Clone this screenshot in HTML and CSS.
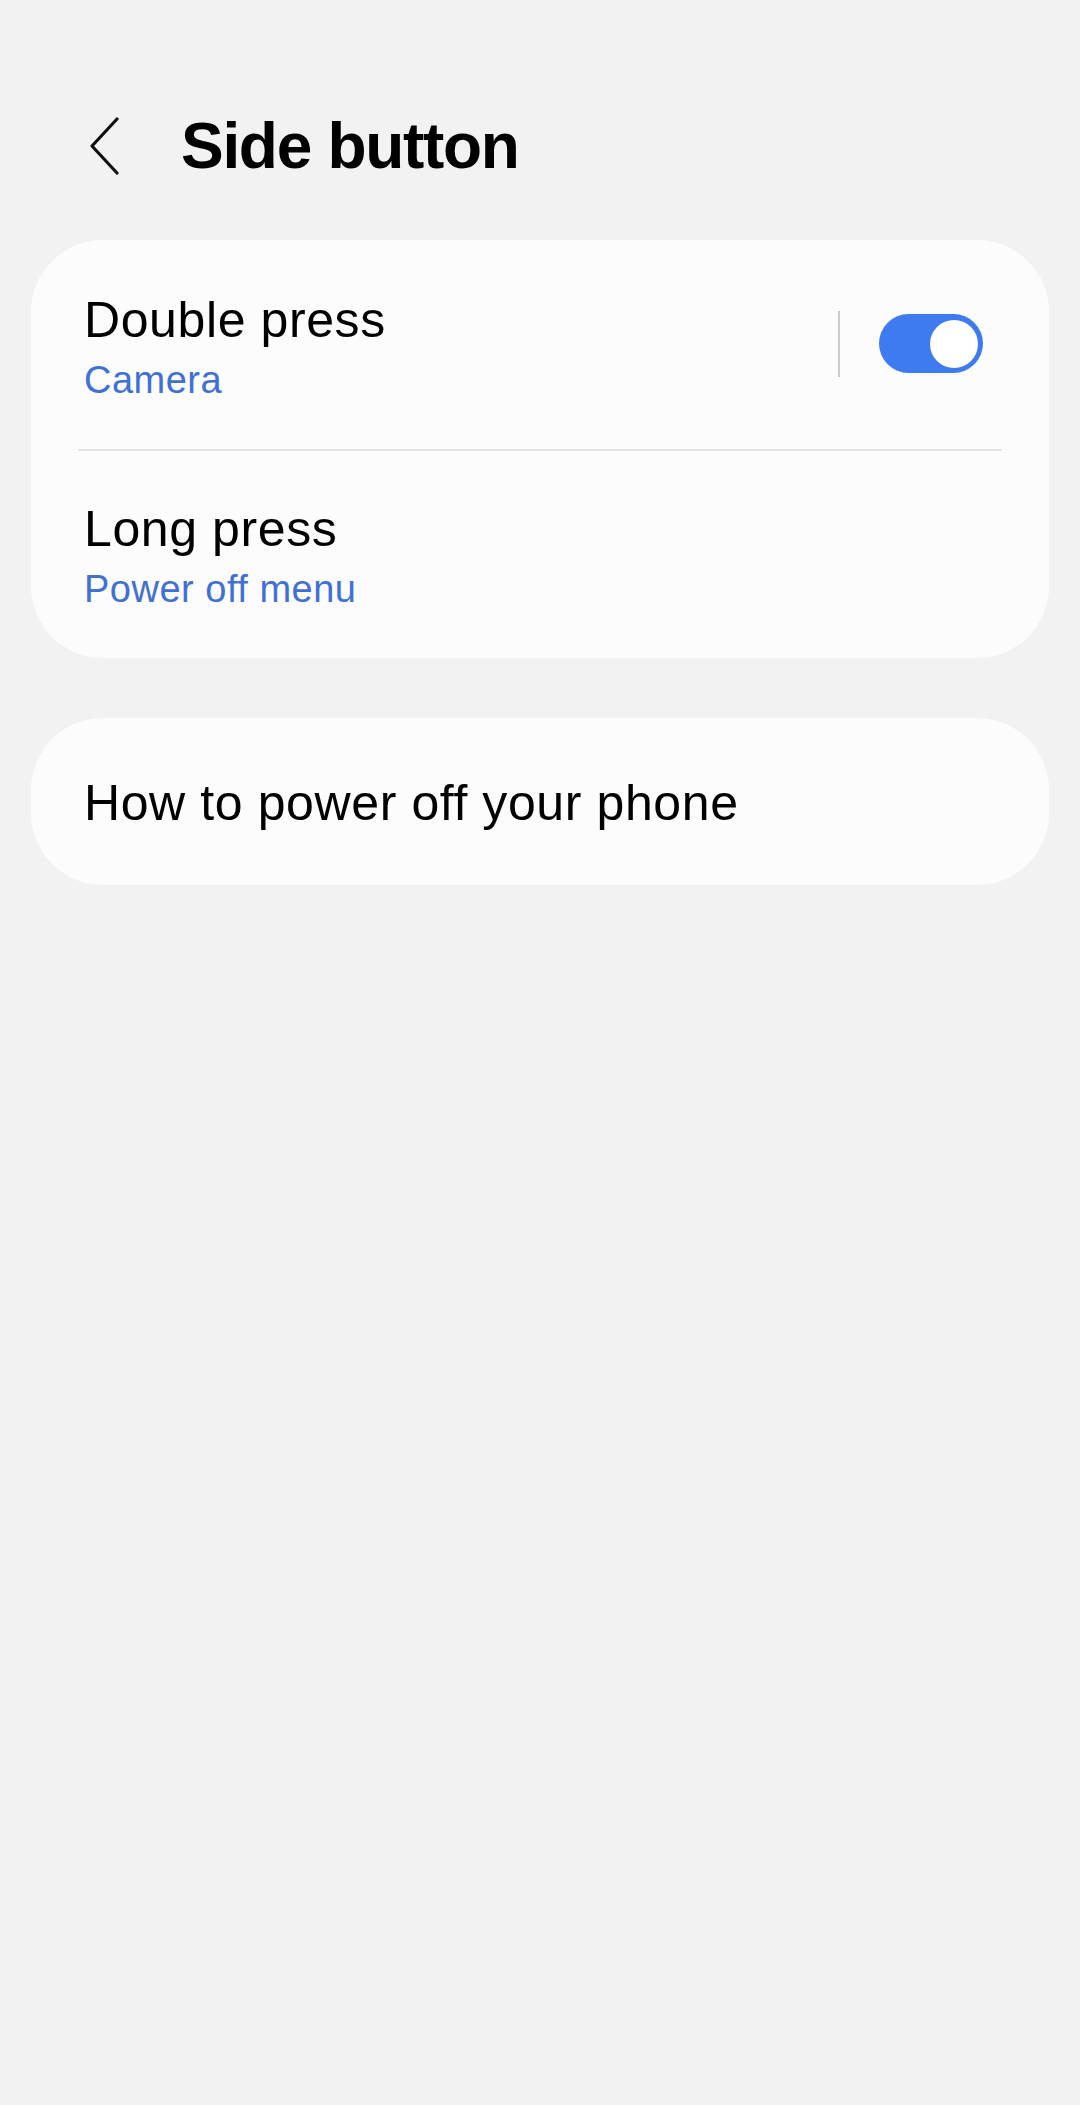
FILE: index.html
```html
<!DOCTYPE html>
<html lang="en">
<head>
    <meta charset="UTF-8">
    <meta name="viewport" content="width=device-width, initial-scale=1.0">
    <title>Side button</title>
    <link rel="stylesheet" href="styles.css">
</head>
<body>
    <div class="header">
        <button class="back" aria-label="Back">
            <svg width="32" height="58" viewBox="0 0 32 58">
                <path d="M28 2 L3 29 L28 56" fill="none" stroke="#111" stroke-width="3.2" stroke-linecap="round" stroke-linejoin="round"/>
            </svg>
        </button>
        <h1>Side button</h1>
    </div>

    <div class="card">
        <div class="row">
            <div class="row-text">
                <div class="title">Double press</div>
                <div class="summary">Camera</div>
            </div>
            <div class="row-switch">
                <span class="sep"></span>
                <span class="switch on"><span class="knob"></span></span>
            </div>
        </div>
        <div class="divider"></div>
        <div class="row">
            <div class="row-text">
                <div class="title">Long press</div>
                <div class="summary">Power off menu</div>
            </div>
        </div>
    </div>

    <div class="card single">
        <div class="title">How to power off your phone</div>
    </div>
</body>
</html>
```

FILE: styles.css
```css
body {
    margin: 0;
    padding: 0 31px;
    background-color: #f2f2f2; /* page background */
    font-family: "Liberation Sans", Arial, sans-serif;
    color: #000;
}
.header {
    display: flex;
    align-items: center;
    padding-top: 106px;
    margin-bottom: 54px;
    height: 80px;
}
.back {
    border: none;
    background: none;
    padding: 0;
    margin-left: 58px;
    width: 32px;
    height: 58px;
    display: flex;
}
.header h1 {
    margin: 0 0 0 60px;
    font-size: 64px;
    line-height: 80px;
    font-weight: bold;
    letter-spacing: -1.3px;
}
.card {
    background-color: #fcfcfc; /* card surface */
    border-radius: 72px;
    padding-top: 2px;
}
.row {
    display: flex;
    align-items: center;
    padding: 48px 66px 46px 53px;
}
.row-text {
    flex: 1;
    display: flex;
    flex-direction: column;
    gap: 7px;
}
.title {
    font-size: 50px;
    line-height: 60px;
    letter-spacing: 0.6px;
}
.summary {
    font-size: 38px;
    line-height: 46px;
    letter-spacing: 0.5px;
    color: #4170d4; /* summary blue */
}
.row-switch {
    display: flex;
    align-items: center;
    gap: 39px;
    margin-top: -6px;
}
.sep {
    width: 2px;
    height: 66px;
    background-color: #cccccc;
}
.switch {
    width: 104px;
    height: 59px;
    border-radius: 30px;
    background-color: #3e7bf0; /* switch on */
    display: flex;
    align-items: center;
    justify-content: flex-end;
    padding-right: 5px;
    box-sizing: border-box;
}
.knob {
    width: 48px;
    height: 48px;
    border-radius: 50%;
    background-color: #fff;
}
.divider {
    height: 2px;
    margin: 0 47px;
    background-color: #e2e2e2;
}
.single {
    margin-top: 60px;
    padding: 55px 53px 52px;
}
```
